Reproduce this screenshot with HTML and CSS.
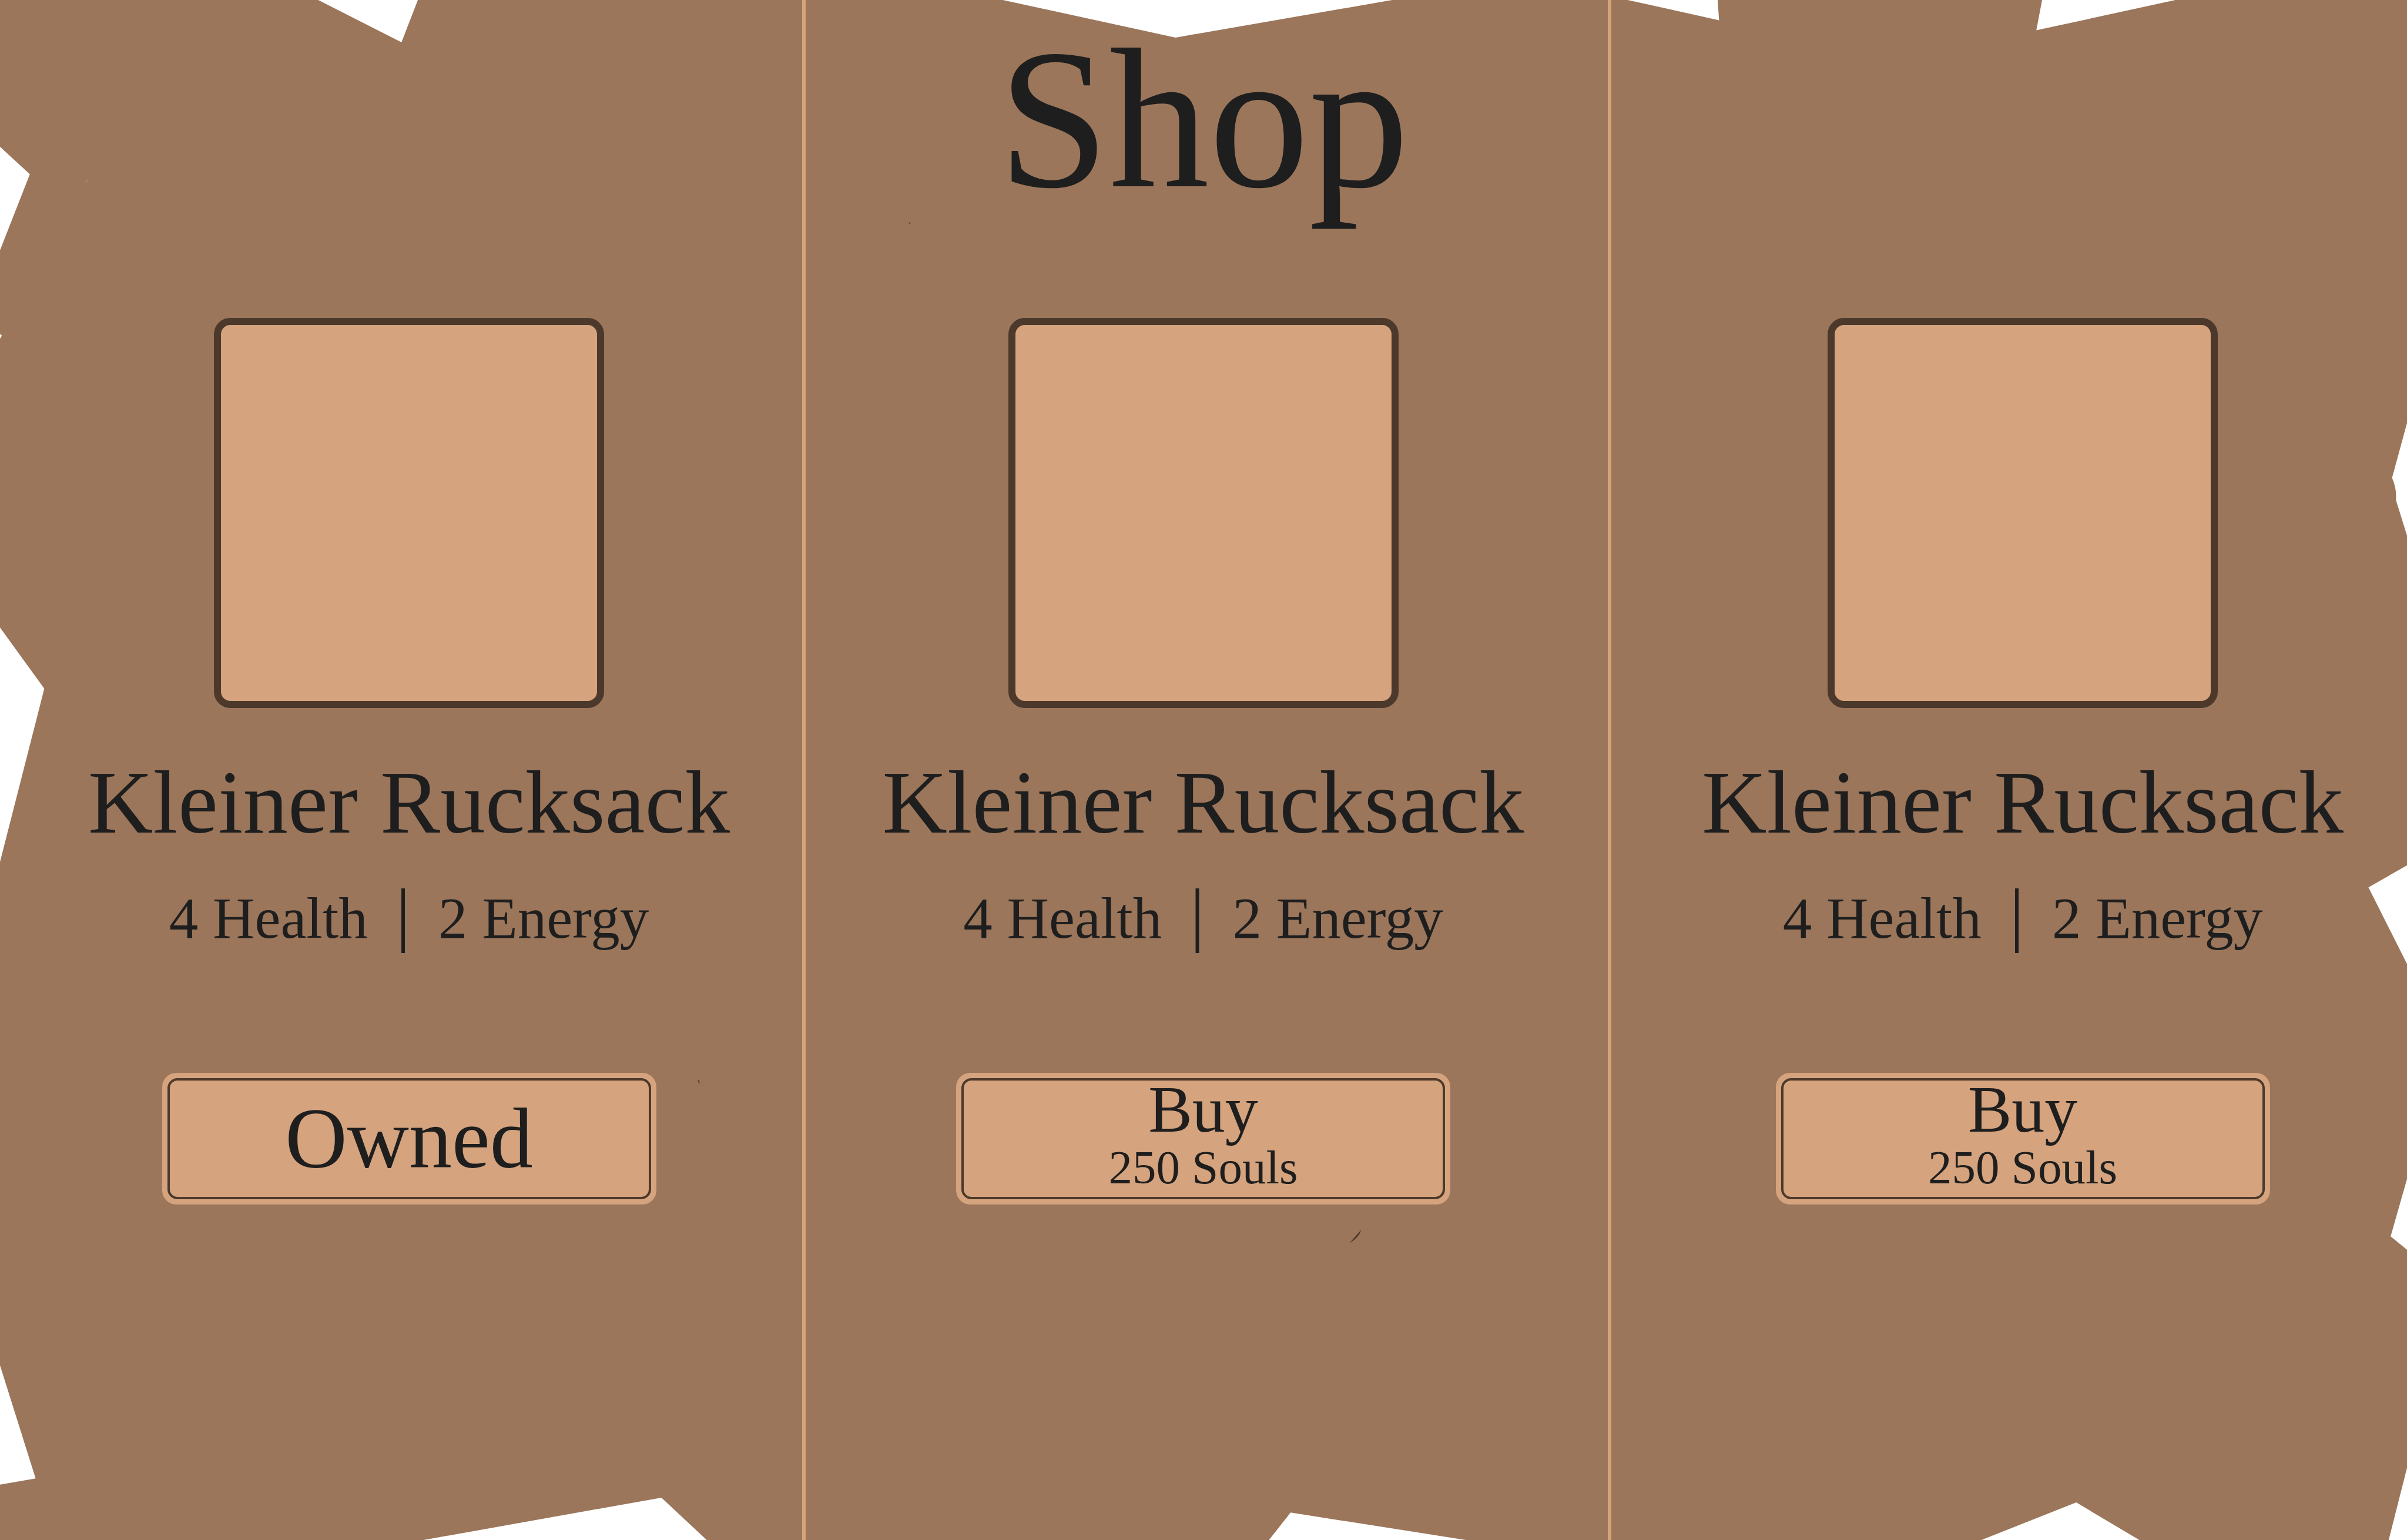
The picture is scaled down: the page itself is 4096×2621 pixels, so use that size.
FILE: index.html
```html
<!DOCTYPE html>
<html lang="en">
<head>
  <meta charset="utf-8">
  <meta name="viewport" content="width=device-width, initial-scale=1">
  <title>Shop</title>
  <link rel="stylesheet" href="styles.css">
</head>
<body>
  <main class="shop">
    <!-- Torn parchment edge and paper flecks -->
    <svg class="parchment" viewBox="0 0 5000 3200" preserveAspectRatio="none" aria-hidden="true">
      <g class="tear">
        <path d="M661 0L834 88L868 0Z"/>
        <path d="M2083 0L2442 78L2892 0Z"/>
        <path d="M3381 0L3571 42L3568 0Z"/>
        <path d="M4242 0L4230 63L4519 0Z"/>
        <path d="M0 305L62 362L0 520Z"/>
        <path d="M0 694L4 697L0 704Z"/>
        <path d="M0 1304L92 1431L0 1791Z"/>
        <path d="M0 2837L74 3072L0 3085Z"/>
        <path d="M880 3200L1374 3112L1468 3200Z"/>
        <path d="M2636 3200L2681 3143L3045 3200Z"/>
        <path d="M4116 3200L4313 3122L4444 3200Z"/>
        <path d="M5000 879L4969 993Q4979 1016 4977 1039L5000 1113Z"/>
        <path d="M5000 1798L4920 1844L5000 2003Z"/>
        <path d="M5000 2450L4966 2569L5000 2597Z"/>
        <path d="M5000 3050L4962 3200H5000Z"/>
      </g>
      <g class="fleck">
        <path d="M1888 462h3v3h-2z"/>
        <path d="M1449 2245h4v8z"/>
        <path d="M2828 2555Q2822 2573 2803 2583Q2814 2571 2828 2555Z"/>
      </g>
      <path class="fleck-light" d="M179 375h2v2h-2z"/>
    </svg>

    <h1 class="shop-title">Shop</h1>

    <article class="item item-first">
      <div class="item-picture"></div>
      <h2 class="item-name">Kleiner Rucksack</h2>
      <p class="item-stats"><span>4 Health</span><span class="bar">|</span><span>2 Energy</span></p>
      <button class="item-button" type="button">
        <span class="button-face"><span class="owned">Owned</span></span>
      </button>
    </article>

    <article class="item item-middle">
      <div class="item-picture"></div>
      <h2 class="item-name">Kleiner Rucksack</h2>
      <p class="item-stats"><span>4 Health</span><span class="bar">|</span><span>2 Energy</span></p>
      <button class="item-button" type="button">
        <span class="button-face"><span class="buy">Buy</span><span class="price">250 Souls</span></span>
      </button>
    </article>

    <article class="item item-last">
      <div class="item-picture"></div>
      <h2 class="item-name">Kleiner Rucksack</h2>
      <p class="item-stats"><span>4 Health</span><span class="bar">|</span><span>2 Energy</span></p>
      <button class="item-button" type="button">
        <span class="button-face"><span class="buy">Buy</span><span class="price">250 Souls</span></span>
      </button>
    </article>
  </main>
</body>
</html>
```
FILE: styles.css
```css
:root {
  --parchment: #9b765b;
  --tan: #d5a37d;
  --umber: #4c392b;
  --ink: #1e1e1e;
}

*,
*::before,
*::after {
  box-sizing: border-box;
}

body {
  margin: 0;
  background: #fff;
  color: var(--ink);
  font-family: "Liberation Serif", "Times New Roman", serif;
}

.shop {
  position: relative;
  display: grid;
  grid-template-columns: minmax(0, 1371fr) minmax(0, 1371fr) minmax(0, 1354fr);
  grid-template-rows: 410px 1fr;
  min-height: 100vh;
  background: var(--parchment);
}

.parchment {
  position: absolute;
  inset: 0;
  width: 100%;
  height: 100%;
}

.tear {
  fill: #fff;
}

.fleck {
  fill: var(--umber);
}

.fleck-light {
  fill: var(--tan);
}

.shop-title {
  position: relative;
  grid-column: 1 / -1;
  grid-row: 1;
  margin: 0;
  font-size: 340px;
  font-weight: 400;
  line-height: 406px;
  text-align: center;
}

.item {
  position: relative;
  grid-row: 1 / -1;
  display: flex;
  flex-direction: column;
  align-items: center;
  padding-top: 541px;
  padding-bottom: 120px;
}

.item-first {
  grid-column: 1;
  padding-left: 27px;
  border-right: 6px solid var(--tan);
}

.item-middle {
  grid-column: 2;
  padding-right: 12px;
  border-right: 6px solid var(--tan);
}

.item-last {
  grid-column: 3;
  padding-left: 46px;
}

.item-picture {
  width: 664px;
  aspect-ratio: 1;
  border: 12px solid var(--umber);
  border-radius: 28px;
  background: var(--tan);
}

.item-name {
  margin: 61px 0 27px;
  font-size: 153px;
  font-weight: 400;
  line-height: 200px;
  white-space: nowrap;
}

.item-stats {
  display: flex;
  align-items: baseline;
  gap: 48px;
  margin: 0 0 193px;
  font-size: 99px;
  line-height: 140px;
  white-space: nowrap;
}

.bar {
  font-size: 120px;
  line-height: 120px;
}

.item-button {
  width: 841px;
  height: 224px;
  padding: 9px;
  border: 0;
  border-radius: 24px;
  background: var(--tan);
  color: inherit;
  font: inherit;
  cursor: pointer;
}

.button-face {
  display: flex;
  flex-direction: column;
  align-items: center;
  justify-content: center;
  height: 100%;
  border: 4px solid var(--umber);
  border-radius: 17px;
}

.owned {
  font-size: 146px;
  line-height: 180px;
}

.buy {
  font-size: 112px;
  line-height: 98px;
}

.price {
  font-size: 81px;
  line-height: 100px;
}
```
